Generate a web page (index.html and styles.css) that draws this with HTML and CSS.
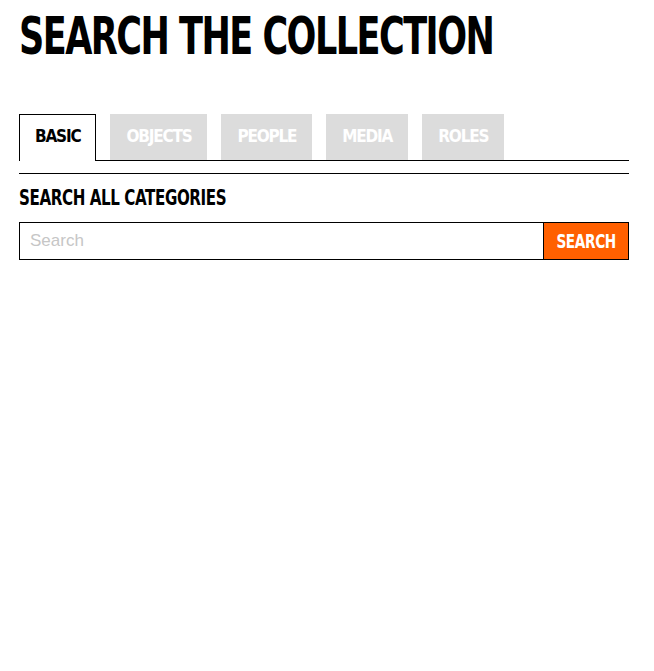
FILE: index.html
```html
<!DOCTYPE html>
<html lang="en">
<head>
<meta charset="utf-8">
<title>Search the Collection</title>
<link rel="stylesheet" href="styles.css">
</head>
<body>
<main class="page">
  <h1 class="title"><span class="title-text">SEARCH THE COLLECTION</span></h1>
  <nav class="tabs">
    <a class="tab tab-active" href="#">BASIC</a>
    <a class="tab" href="#">OBJECTS</a>
    <a class="tab" href="#">PEOPLE</a>
    <a class="tab" href="#">MEDIA</a>
    <a class="tab" href="#">ROLES</a>
  </nav>
  <section class="panel">
    <h2 class="panel-title">SEARCH ALL CATEGORIES</h2>
    <form class="search" onsubmit="return false">
      <input class="search-input" type="text" placeholder="Search">
      <button class="search-button" type="submit"><span class="search-button-text">SEARCH</span></button>
    </form>
  </section>
</main>
</body>
</html>
```
FILE: styles.css
```css
html, body {
  margin: 0;
  padding: 0;
  background: #fff;
}

.page {
  width: 610px;
  margin-left: 19px;
  font-family: "DejaVu Sans Condensed", "Liberation Sans Narrow", "Arial Narrow", sans-serif;
  font-weight: 700;
  color: #000;
}

.title {
  margin: 0;
  padding-top: 15px;
  font-size: 39px;
  line-height: 52px;
  font-weight: 700;
  white-space: nowrap;
}

.title-text {
  display: inline-block;
  letter-spacing: -1.53px;
  transform: scaleY(1.307);
  transform-origin: 0 39.5px;
}

.tabs {
  display: flex;
  align-items: flex-start;
  gap: 14px;
  margin-top: 47px;
  border-bottom: 1px solid #000;
}

.tab {
  display: block;
  box-sizing: border-box;
  height: 46px;
  padding: 0 15px;
  border: 1px solid transparent;
  border-bottom: none;
  background: #dcdcdc;
  color: #fff;
  font-size: 17px;
  line-height: 42px;
  text-decoration: none;
  letter-spacing: -1.2px;
}

.tab-active {
  height: 47px;
  margin-bottom: -1px;
  background: #fff;
  color: #000;
  border-color: #000;
}

.panel {
  margin-top: 12px;
  border-top: 1px solid #000;
}

.panel-title {
  margin: 0;
  padding-top: 12px;
  font-size: 21px;
  line-height: 24px;
  font-weight: 700;
  letter-spacing: -0.5px;
  white-space: nowrap;
  transform: scaleX(0.8);
  transform-origin: 0 50%;
}

.search {
  display: flex;
  margin-top: 12px;
  height: 38px;
}

.search-input {
  flex: 1;
  min-width: 0;
  box-sizing: border-box;
  height: 38px;
  margin: 0;
  padding: 0 10px;
  border: 1px solid #000;
  border-right: none;
  border-radius: 0;
  outline: none;
  font-family: "Liberation Sans", Arial, sans-serif;
  font-size: 17px;
  color: #000;
}

.search-input::placeholder {
  color: #c6c6c6;
}

.search-button {
  box-sizing: border-box;
  width: 86px;
  height: 38px;
  margin: 0;
  padding: 0;
  border: 1px solid #000;
  border-radius: 0;
  background: #ff6000;
  color: #fff;
  font-family: "DejaVu Sans Condensed", "Liberation Sans Narrow", "Arial Narrow", sans-serif;
  font-weight: 700;
  font-size: 19px;
  cursor: pointer;
}

.search-button-text {
  display: inline-block;
  letter-spacing: -0.5px;
  transform: scaleX(0.8);
}
```
